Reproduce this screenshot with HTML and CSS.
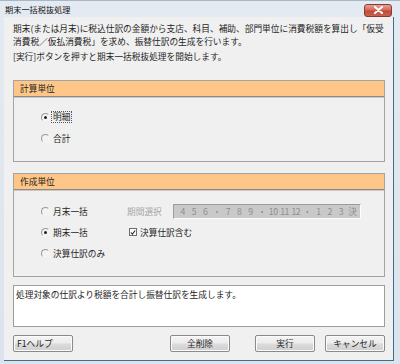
FILE: index.html
```html
<!DOCTYPE html>
<html lang="ja">
<head>
<meta charset="utf-8">
<link rel="stylesheet" href="styles.css">
</head>
<body>
<div class="window">
  <div class="titlebar">
    <span class="title">期末一括税抜処理</span>
    <span class="close"><svg width="11" height="8" viewBox="0 0 11 8"><path d="M2 1 L9 7 M9 1 L2 7" stroke="#fff" stroke-width="2" stroke-linecap="round"/></svg></span>
  </div>
  <div class="client">
    <p class="desc">期末(または月末)に税込仕訳の金額から支店、科目、補助、部門単位に消費税額を算出し「仮受<br>消費税／仮払消費税」を求め、振替仕訳の生成を行います。</p>
    <p class="desc note">[実行]ボタンを押すと期末一括税抜処理を開始します。</p>

    <div class="group g1">
      <div class="ghead">計算単位</div>
      <div class="gbody">
        <div class="row"><span class="radio on"></span><span class="focus">明細</span></div>
        <div class="row"><span class="radio"></span><span>合計</span></div>
      </div>
    </div>

    <div class="group g2">
      <div class="ghead">作成単位</div>
      <div class="gbody grid">
        <div class="row"><span class="radio"></span><span>月末一括</span></div>
        <div class="row"><span class="dis">期間選択</span>
          <div class="period"><span>4</span><span>5</span><span>6</span><span>・</span><span>7</span><span>8</span><span>9</span><span>・</span><span>10</span><span>11</span><span>12</span><span>・</span><span>1</span><span>2</span><span>3</span><span>決</span></div>
        </div>
        <div class="row"><span class="radio on"></span><span>期末一括</span></div>
        <div class="row chkrow"><span class="check"><svg width="7" height="7" viewBox="0 0 7 7"><path d="M1 3.5 L2.8 5.5 L6 1.2" stroke="#222" stroke-width="1.3" fill="none"/></svg></span><span>決算仕訳含む</span></div>
        <div class="row"><span class="radio"></span><span>決算仕訳のみ</span></div>
      </div>
    </div>

    <div class="msg">処理対象の仕訳より税額を合計し振替仕訳を生成します。</div>

    <div class="buttons">
      <button class="btn help">F1ヘルプ</button>
      <button class="btn clear">全削除</button>
      <button class="btn run">実行</button>
      <button class="btn">キャンセル</button>
    </div>
  </div>
</div>
</body>
</html>
```

FILE: styles.css
```css
* { box-sizing: border-box; }
html, body { margin: 0; padding: 0; }
body {
  width: 400px;
  height: 364px;
  overflow: hidden;
  font-family: "Noto Sans CJK JP", sans-serif;
  font-size: 8.7px;
  color: #1e1e1e;
  background: #dfe6ee;
}
.window {
  width: 400px;
  height: 364px;
  display: flex;
  flex-direction: column;
  border-top: 1px solid #a9b6c4;
  background: linear-gradient(#e4eaf1, #dbe3ec);
}
.titlebar {
  height: 16px;
  display: flex;
  align-items: center;
  padding: 0 8px 0 5px;
}
.title {
  font-size: 8.2px;
  color: #111;
}
.close {
  margin-left: auto;
  width: 28px;
  height: 13px;
  margin-top: 2px;
  border: 1px solid #8a3a30;
  border-radius: 3px;
  background: linear-gradient(#e7a196, #d26a5a 45%, #c04a36 55%, #c8624f);
  display: flex;
  align-items: center;
  justify-content: center;
}
.close svg { display: block; }
.client {
  flex: 1;
  margin: 0 6px 3px 4px;
  background: #f0f0f0;
  border-right: 1px solid #3b6f8a;
  border-bottom: 1px solid #3b6f8a;
  padding: 6px 8px 0 9px;
  display: flex;
  flex-direction: column;
}
.desc {
  margin: 0;
  line-height: 12.6px;
  white-space: nowrap;
}
.desc.note { margin-top: 3px; }
.group {
  border: 1px solid #a3a3a3;
  margin-top: 16px;
}
.g2 { margin-top: 11px; }
.ghead {
  height: 16px;
  background: #ffc787;
  border-bottom: 1px solid #8a8a8a;
  box-shadow: 0 1px 0 #c8c8c8;
  padding-left: 6px;
  line-height: 15px;
}
.gbody {
  padding: 10px 0 12px 27px;
}
.g1 .gbody { height: 64px; }
.g2 .gbody { padding-top: 11px; height: 86px; }
.grid {
  display: grid;
  grid-template-columns: 86px auto;
}
.row {
  height: 21px;
  display: flex;
  align-items: center;
}
.radio {
  width: 9px;
  height: 9px;
  border-radius: 50%;
  border: 1px solid;
  border-color: #9a9a9a #f4f4f4 #f4f4f4 #9a9a9a;
  background: #f3f3f3;
  margin-right: 3px;
  display: flex;
  align-items: center;
  justify-content: center;
}
.radio.on::after {
  content: "";
  width: 3px;
  height: 3px;
  border-radius: 50%;
  background: #222;
}
.focus {
  outline: 1px dotted #555;
  padding: 0 1px;
  margin-left: -1px;
  line-height: 10px;
}
.dis { color: #a6a6a6; width: 46px; }
.period {
  width: 188px;
  height: 15px;
  background: #c9c9c9;
  border: 1px solid;
  border-color: #9c9c9c #fdfdfd #fdfdfd #9c9c9c;
  display: flex;
  align-items: center;
  padding: 0 2px 0 3px;
  color: #8e8e8e;
}
.period span {
  flex: 1;
  text-align: center;
  letter-spacing: -0.5px;
}
.chkrow { padding-left: 2px; }
.check {
  width: 8px;
  height: 8px;
  border: 1px solid #6d6d6d;
  background: #fafafa;
  margin-right: 3px;
  display: flex;
  align-items: center;
  justify-content: center;
}
.check svg { display: block; }
.msg {
  margin-top: 8px;
  height: 42px;
  background: #fff;
  border: 1px solid #9d9d9d;
  padding: 3px 2px;
  line-height: 11px;
}
.buttons {
  margin-top: 8px;
  display: flex;
}
.btn {
  width: 60px;
  height: 17px;
  padding: 0;
  font: inherit;
  color: #1e1e1e;
  border: 1px solid #8a8a8a;
  border-radius: 2px;
  background: linear-gradient(#f4f4f4, #ececec 48%, #dcdcdc 52%, #cfcfcf);
  box-shadow: inset 0 0 0 1px #fbfbfb;
  text-align: center;
}
.btn.help { text-align: left; padding-left: 3px; }
.btn.clear { margin-left: auto; margin-right: 25px; }
.btn.run { margin-right: 10px; }
```
